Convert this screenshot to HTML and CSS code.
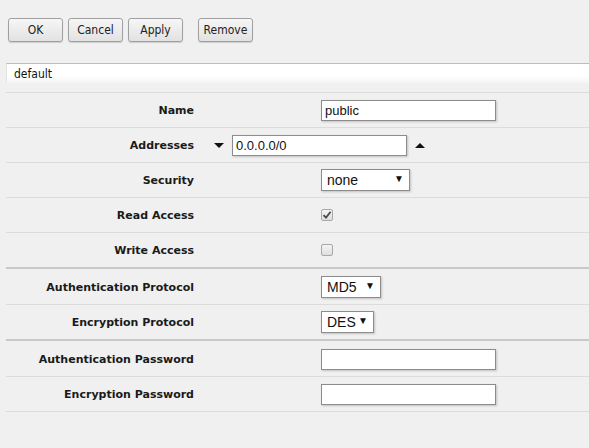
FILE: index.html
```html
<!DOCTYPE html>
<html lang="en">
<head>
    <meta charset="UTF-8">
    <title>SNMP Community</title>
    <link rel="stylesheet" href="styles.css">
</head>
<body>

    <!-- Dialog buttons -->
    <div class="toolbar">
        <button class="btn">OK</button>
        <button class="btn">Cancel</button>
        <button class="btn">Apply</button>
        <button class="btn btn-sep">Remove</button>
    </div>

    <!-- Item title -->
    <div class="title-bar">default</div>

    <div class="form">
        <div class="row">
            <div class="label">Name</div>
            <div class="value">
                <input type="text" class="field" value="public">
            </div>
        </div>

        <div class="row">
            <div class="label">Addresses</div>
            <div class="value value-multi">
                <span class="arrow arrow-down"></span>
                <input type="text" class="field" value="0.0.0.0/0">
                <span class="arrow arrow-up"></span>
            </div>
        </div>

        <div class="row">
            <div class="label">Security</div>
            <div class="value">
                <div class="select select-wide">none<span class="caret">&#9660;</span></div>
            </div>
        </div>

        <div class="row">
            <div class="label">Read Access</div>
            <div class="value">
                <span class="check">
                    <svg width="10" height="10" viewBox="0 0 10 10"><path d="M1.5 5.2 L4 7.6 L8.6 1.8" fill="none" stroke="#4a4a4a" stroke-width="1.8"/></svg>
                </span>
            </div>
        </div>

        <div class="row section-end">
            <div class="label">Write Access</div>
            <div class="value">
                <span class="check"></span>
            </div>
        </div>

        <div class="row">
            <div class="label">Authentication Protocol</div>
            <div class="value">
                <div class="select select-md5">MD5<span class="caret">&#9660;</span></div>
            </div>
        </div>

        <div class="row section-end">
            <div class="label">Encryption Protocol</div>
            <div class="value">
                <div class="select select-des">DES<span class="caret">&#9660;</span></div>
            </div>
        </div>

        <div class="row">
            <div class="label">Authentication Password</div>
            <div class="value">
                <input type="text" class="field" value="">
            </div>
        </div>

        <div class="row">
            <div class="label">Encryption Password</div>
            <div class="value">
                <input type="text" class="field" value="">
            </div>
        </div>
    </div>

</body>
</html>
```

FILE: styles.css
```css
/* Page */
body {
    margin: 0;
    background: #f0f0f0;
    font-family: "DejaVu Sans Condensed", "DejaVu Sans", sans-serif;
    color: #111;
}

/* Toolbar buttons */
.toolbar {
    display: flex;
    gap: 5px;
    padding: 18px 0 0 8px;
}

.btn {
    width: 55px;
    height: 24px;
    padding: 0;
    border: 1px solid #a0a0a0;
    border-radius: 3px;
    background: linear-gradient(to bottom, #f6f6f6, #e2e2e2);
    box-shadow: 0 1px 1px rgba(0, 0, 0, 0.15);
    font-family: inherit;
    font-size: 12px;
    color: #222;
}

.btn-sep {
    margin-left: 10px;
}

/* Title bar */
.title-bar {
    margin: 21px 0 0 6px;
    height: 19px;
    line-height: 20px;
    padding-left: 7px;
    border-top: 1px solid #bcbcbc;
    border-left: 1px solid #e4e4e4;
    background: linear-gradient(to bottom, #ffffff 60%, #f4f4f4);
    font-size: 12px;
}

/* Form rows */
.form {
    margin: 9px 0 0 6px;
    border-top: 1px solid #dcdcdc;
}

.row {
    display: flex;
    align-items: center;
    height: 34px;
    border-bottom: 1px solid #dcdcdc;
}

.row.section-end {
    border-bottom: 2px solid #c8c8c8;
    margin-bottom: 1px;
}

.label {
    width: 188px;
    text-align: right;
    font-family: "DejaVu Sans", Verdana, sans-serif;
    font-size: 11px;
    font-weight: bold;
    color: #1a1a1a;
}

.value {
    display: flex;
    align-items: center;
    margin-left: 127px;
}

.value-multi {
    margin-left: 20px;
}

/* Inputs */
.field {
    box-sizing: border-box;
    width: 175px;
    height: 21px;
    margin: 0;
    padding: 0 3px;
    border: 1px solid #8c8c8c;
    box-shadow: 1px 1px 2px rgba(0, 0, 0, 0.2);
    background: #fff;
    font-family: "Liberation Sans", Arial, sans-serif;
    font-size: 13px;
    color: #111;
    outline: none;
}

.arrow {
    width: 0;
    height: 0;
    border-left: 5px solid transparent;
    border-right: 5px solid transparent;
}

.arrow-down {
    border-top: 5px solid #111;
    margin: 0 8px 0 0;
}

.arrow-up {
    border-bottom: 5px solid #111;
    margin: 0 0 0 8px;
}

/* Drop-down selects */
.select {
    box-sizing: border-box;
    display: flex;
    align-items: center;
    justify-content: space-between;
    height: 22px;
    padding: 0 5px 0 5px;
    border: 1px solid #8c8c8c;
    box-shadow: 1px 1px 2px rgba(0, 0, 0, 0.2);
    background: #fff;
    font-family: "Liberation Sans", Arial, sans-serif;
    font-size: 14px;
    color: #111;
}

.select-wide { width: 89px; }
.select-md5 { width: 60px; }
.select-des { width: 53px; }

.caret {
    font-size: 10px;
    margin-top: -3px;
}

/* Checkboxes */
.check {
    box-sizing: border-box;
    display: flex;
    align-items: center;
    justify-content: center;
    width: 12px;
    height: 12px;
    border: 1px solid #a8a8a8;
    border-radius: 2px;
    background: linear-gradient(to bottom, #f4f4f4, #dedede);
}
```
